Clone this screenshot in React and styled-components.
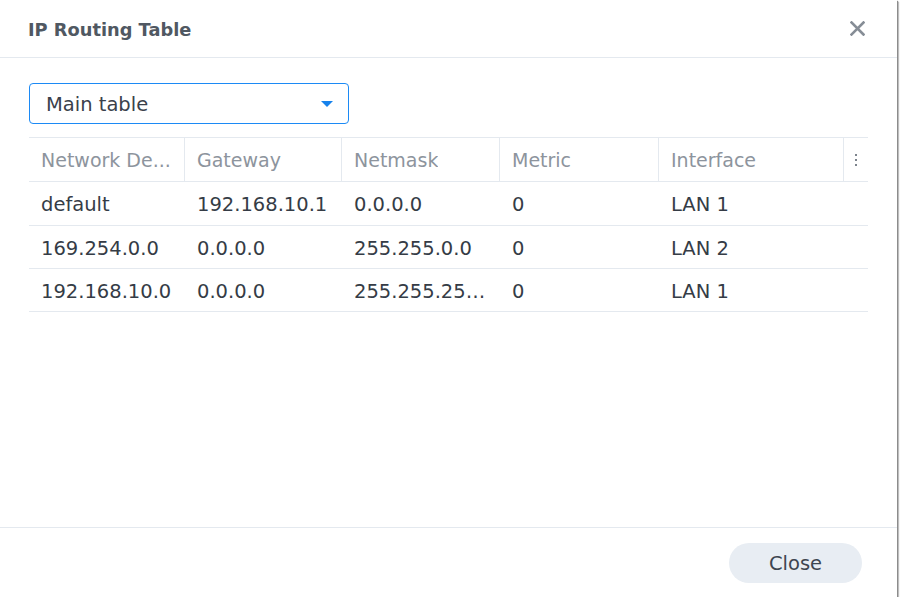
import React from 'react'
import styled, { createGlobalStyle } from 'styled-components'

const Global = createGlobalStyle`
  html, body {
    margin: 0;
    padding: 0;
    background: #ffffff;
  }
  body {
    font-family: "DejaVu Sans", Verdana, sans-serif;
  }
`

const Window = styled.div`
  width: 897px;
  height: 597px;
  background: #fff;
  display: flex;
  flex-direction: column;
  box-shadow: 1px 1px 1px #8c8c8c, 2px 2px 1px #c8c8c8;
`

const Header = styled.div`
  height: 57px;
  flex: none;
  display: flex;
  align-items: center;
  justify-content: space-between;
  padding: 0 31px 0 28px;
  border-bottom: 1px solid #e4e9ef;
`

const Title = styled.h1`
  margin: 0;
  font-size: 17.8px;
  font-weight: bold;
  color: #505862;
  padding-top: 2px;
`

const CloseX = styled.button`
  border: 0;
  background: none;
  padding: 0;
  width: 18px;
  height: 18px;
  display: flex;
  align-items: center;
  justify-content: center;
  cursor: pointer;
`

const Body = styled.div`
  flex: 1;
  padding: 25px 30px 0 29px;
`

const Select = styled.div`
  border: 1px solid #1c8af5;
  border-radius: 4px;
  display: flex;
  align-items: center;
  justify-content: space-between;
  padding: 1px 16px 0;
  box-sizing: border-box;
  width: 320px;
  height: 41px;
  font-size: 19.5px;
  color: #3a414b;
`

const Caret = styled.span`
  width: 0;
  height: 0;
  border-left: 6px solid transparent;
  border-right: 6px solid transparent;
  border-top: 6px solid #1682ec;
  margin-right: -1px;
`

const Grid = styled.div`
  margin-top: 13px;
  width: 839px;
  display: grid;
  grid-template-columns: 156px 157px 158px 159px 185px 24px;
  border-top: 1px solid #e4e9ef;
  font-size: 19.5px;
`

const HeadCell = styled.div`
  box-sizing: border-box;
  height: 44px;
  display: flex;
  align-items: center;
  padding: 1px 6px 0 12px;
  font-size: 19px;
  color: #8d949d;
  border-bottom: 1px solid #e4e9ef;
  border-right: 1px solid #e4e9ef;
  white-space: nowrap;
  overflow: hidden;
  min-width: 0;
  span {
    overflow: hidden;
    text-overflow: ellipsis;
  }
`

const MenuCell = styled.div`
  box-sizing: border-box;
  height: 44px;
  display: flex;
  flex-direction: column;
  align-items: center;
  justify-content: center;
  gap: 3px;
  border-bottom: 1px solid #e4e9ef;
  i {
    width: 2px;
    height: 2px;
    background: #7d848d;
  }
`

const Cell = styled.div`
  box-sizing: border-box;
  height: ${p => (p.$first ? '44px' : '43px')};
  display: flex;
  align-items: center;
  padding: 2px 11px 0 12px;
  color: #353c46;
  border-bottom: 1px solid #e4e9ef;
  white-space: nowrap;
  overflow: hidden;
  min-width: 0;
  span {
    overflow: hidden;
    text-overflow: ellipsis;
  }
`

const Footer = styled.div`
  height: 69px;
  flex: none;
  border-top: 1px solid #e4e9ef;
  display: flex;
  align-items: center;
  justify-content: flex-end;
  padding-right: 35px;
`

const Button = styled.button`
  width: 133px;
  height: 40px;
  border: 0;
  border-radius: 20px;
  background: #e8edf3;
  color: #3d4550;
  font-family: "DejaVu Sans", Verdana, sans-serif;
  font-size: 19.5px;
  padding-top: 2px;
  cursor: pointer;
`

const columns = ['Network De...', 'Gateway', 'Netmask', 'Metric', 'Interface']

const routes = [
  ['default', '192.168.10.1', '0.0.0.0', '0', 'LAN 1'],
  ['169.254.0.0', '0.0.0.0', '255.255.0.0', '0', 'LAN 2'],
  ['192.168.10.0', '0.0.0.0', '255.255.255.0', '0', 'LAN 1'],
]

export default function App() {
  return (
    <>
      <Global />
      <Window>
        <Header>
          <Title>IP Routing Table</Title>
          <CloseX aria-label="close">
            <svg width="15" height="15" viewBox="0 0 15 15">
              <path d="M1.5 1.5 L13.5 13.5 M13.5 1.5 L1.5 13.5" stroke="#868d96" strokeWidth="2.6" strokeLinecap="square" />
            </svg>
          </CloseX>
        </Header>
        <Body>
          <Select>
            <span>Main table</span>
            <Caret />
          </Select>
          <Grid>
            {columns.map(c => (
              <HeadCell key={c}>
                <span>{c}</span>
              </HeadCell>
            ))}
            <MenuCell>
              <i />
              <i />
              <i />
            </MenuCell>
            {routes.map((r, ri) => (
              <React.Fragment key={ri}>
                {r.map((v, ci) => (
                  <Cell key={ci} $first={ri === 0}>
                    <span>{v}</span>
                  </Cell>
                ))}
                <Cell $first={ri === 0} />
              </React.Fragment>
            ))}
          </Grid>
        </Body>
        <Footer>
          <Button>Close</Button>
        </Footer>
      </Window>
    </>
  )
}
